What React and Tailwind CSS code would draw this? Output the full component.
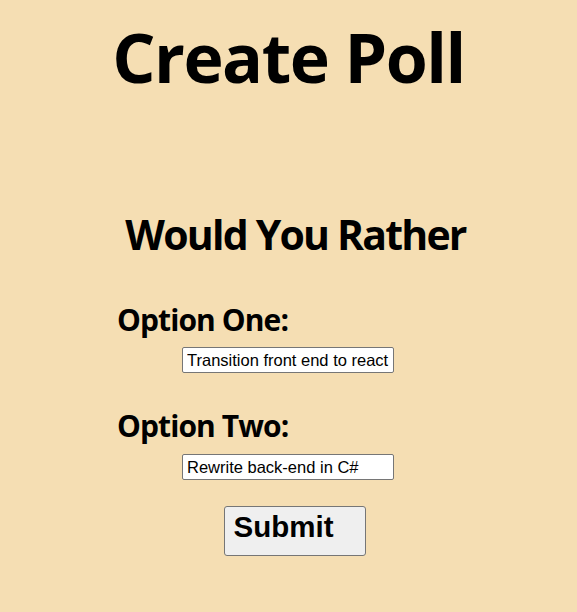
import React, { useState } from "react";

const heading = { fontFamily: '"Open Sans", "Noto Sans", sans-serif' };
const plain = { fontFamily: '"Liberation Sans", Arial, sans-serif' };

export default function App() {
  const [optionOne, setOptionOne] = useState("Transition front end to react");
  const [optionTwo, setOptionTwo] = useState("Rewrite back-end in C#");

  return (
    <div className="min-h-[612px] w-full bg-[#f5deb3] text-black" style={heading}>
      <h1 className="pt-[23px] text-center text-[68px] font-bold leading-none tracking-[-1.5px] whitespace-nowrap">
        Create Poll
      </h1>

      <form
        className="ml-[116px] w-[359px] flex flex-col"
        onSubmit={(e) => e.preventDefault()}
      >
        <h2 className="mt-[123px] text-center text-[41px] font-bold leading-none tracking-[-1.8px] whitespace-nowrap">
          Would You Rather
        </h2>

        <label className="mt-[50px] ml-px text-[30px] font-bold leading-none tracking-[-0.9px] whitespace-nowrap">
          Option One:
        </label>
        <input
          type="text"
          value={optionOne}
          onChange={(e) => setOptionOne(e.target.value)}
          className="ml-[66px] mt-[12px] h-[26px] w-[212px] rounded-[2px] border border-[#767676] bg-white px-[4px] text-[16.5px] text-black outline-none"
          style={plain}
        />

        <label className="mt-[38px] ml-px text-[30px] font-bold leading-none tracking-[-0.9px] whitespace-nowrap">
          Option Two:
        </label>
        <input
          type="text"
          value={optionTwo}
          onChange={(e) => setOptionTwo(e.target.value)}
          className="ml-[66px] mt-[13px] h-[26px] w-[212px] rounded-[2px] border border-[#767676] bg-white px-[4px] text-[16.5px] text-black outline-none"
          style={plain}
        />

        <button
          type="submit"
          className="mt-[26px] h-[50px] w-[142px] self-center -translate-x-px rounded-[3px] border border-[#767676] bg-[#efefef] pl-[9px] pt-[5px] text-left text-[29.5px] font-bold leading-none text-black flex items-start"
          style={plain}
        >
          Submit
        </button>
      </form>
    </div>
  );
}
